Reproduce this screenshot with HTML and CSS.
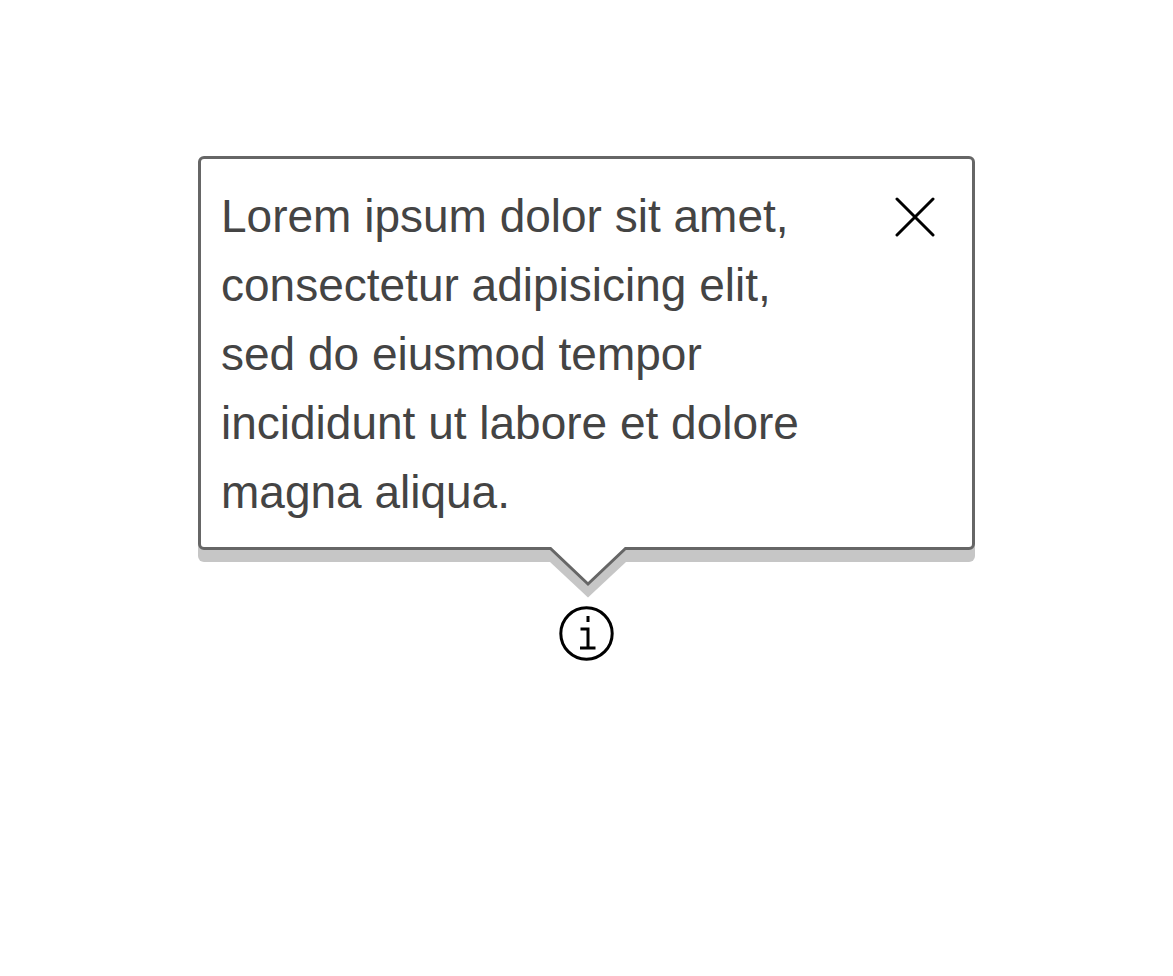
FILE: index.html
```html
<!DOCTYPE html>
<html lang="en">
<head>
<meta charset="utf-8">
<meta name="viewport" content="width=device-width, initial-scale=1">
<title>Tooltip</title>
<link rel="stylesheet" href="styles.css">
</head>
<body>
<main class="stage">
  <div class="tooltip" role="tooltip" id="tip">
    <p class="tooltip-text">Lorem ipsum dolor sit amet, consectetur adipisicing elit, sed do eiusmod tempor incididunt ut labore et dolore magna aliqua.</p>
    <button class="close" type="button" aria-label="Close">
      <svg class="close-icon" viewBox="0 0 40 40" aria-hidden="true"><path d="M2 2 38 38M38 2 2 38"/></svg>
    </button>
    <svg class="arrow" viewBox="0 0 81 52" aria-hidden="true">
      <path class="arrow-shadow" d="M4 1.5H80V15L42 50.5 4 15Z"/>
      <path class="arrow-fill" d="M4 0H80V1.5L42 37 4 1.5Z"/>
      <path class="arrow-line" d="M0 1.5H4.5L42 37 79.5 1.5H81"/>
    </svg>
  </div>
  <button class="info" type="button" aria-label="More information" aria-describedby="tip">
    <svg class="info-icon" viewBox="0 0 55 55" aria-hidden="true">
      <circle cx="27.5" cy="27.5" r="25.7"/>
      <path d="M29 10V16M21.5 23H29V42M21 42H36.5"/>
    </svg>
  </button>
</main>
</body>
</html>
```
FILE: styles.css
```css
* {
  box-sizing: border-box;
}

body {
  margin: 0;
  background: #fff;
  font-family: "Liberation Sans", Arial, sans-serif;
}

.stage {
  display: flex;
  flex-direction: column;
  align-items: center;
  gap: 56px;
  padding: 156px 24px;
}

.tooltip {
  position: relative;
  display: flex;
  align-items: flex-start;
  justify-content: space-between;
  gap: 24px;
  width: 100%;
  max-width: 777px;
  padding: 23px 37px 20px 20px;
  background: #fff;
  border: 3px solid #666;
  border-radius: 6px;
  box-shadow: 0 12px 0 #c6c6c6;
}

.tooltip-text {
  max-width: 600px;
  margin: 0;
  color: #444;
  font-size: 46px;
  line-height: 69px;
}

.close,
.info {
  display: block;
  flex: none;
  padding: 0;
  border: 0;
  background: none;
  color: #000;
  cursor: pointer;
}

.close {
  padding-top: 15px;
}

.close-icon {
  display: block;
  width: 40px;
  height: 40px;
}

.info-icon {
  display: block;
  width: 55px;
  height: 55px;
}

.close-icon,
.info-icon {
  fill: none;
  stroke: currentColor;
  stroke-width: 3;
}

.close-icon {
  stroke-linecap: round;
}

.arrow {
  position: absolute;
  top: 100%;
  left: calc(50% - 41px);
  width: 81px;
  height: 52px;
}

.arrow-shadow {
  fill: #c6c6c6;
}

.arrow-fill {
  fill: #fff;
}

.arrow-line {
  fill: none;
  stroke: #666;
  stroke-width: 3;
}
```
